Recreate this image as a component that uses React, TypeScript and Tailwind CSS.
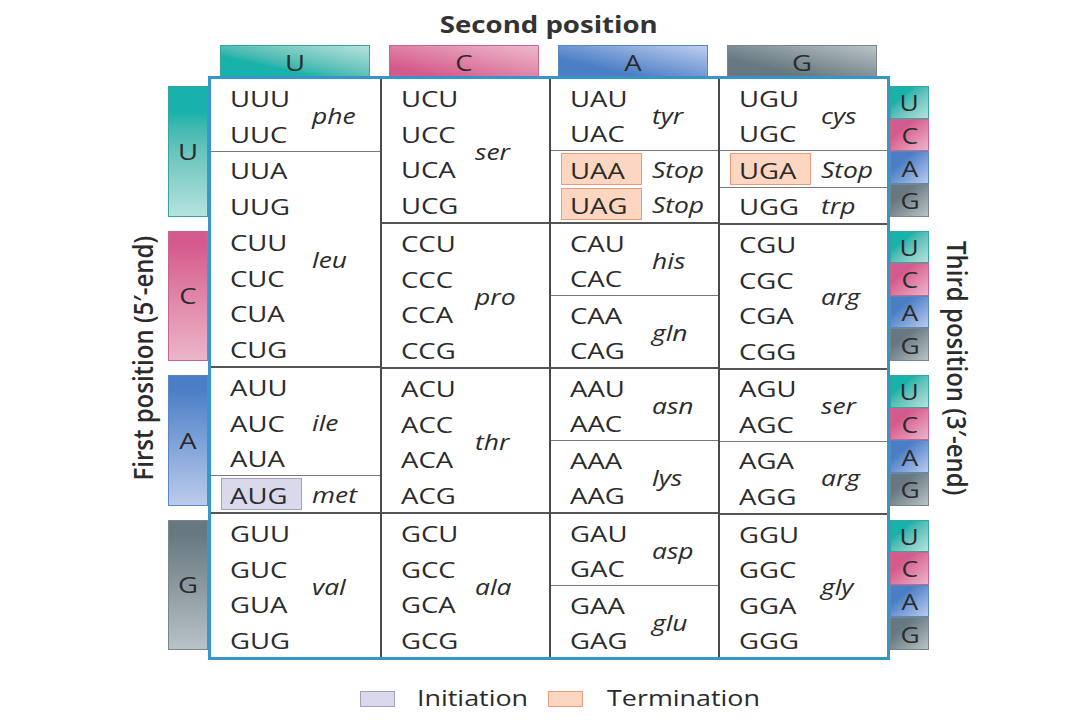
import React from 'react';

type Mark = 'init' | 'term';
type Group = { codons: string[]; aa: string; mark?: Mark; perLine?: boolean };

const columns: { labelMl: string; groups: Group[] }[] = [
  {
    labelMl: 'ml-[10px]',
    groups: [
      { codons: ['UUU', 'UUC'], aa: 'phe' },
      { codons: ['UUA', 'UUG', 'CUU', 'CUC', 'CUA', 'CUG'], aa: 'leu' },
      { codons: ['AUU', 'AUC', 'AUA'], aa: 'ile' },
      { codons: ['AUG'], aa: 'met', mark: 'init' },
      { codons: ['GUU', 'GUC', 'GUA', 'GUG'], aa: 'val' },
    ],
  },
  {
    labelMl: 'ml-[2px]',
    groups: [
      { codons: ['UCU', 'UCC', 'UCA', 'UCG'], aa: 'ser' },
      { codons: ['CCU', 'CCC', 'CCA', 'CCG'], aa: 'pro' },
      { codons: ['ACU', 'ACC', 'ACA', 'ACG'], aa: 'thr' },
      { codons: ['GCU', 'GCC', 'GCA', 'GCG'], aa: 'ala' },
    ],
  },
  {
    labelMl: 'ml-[10px]',
    groups: [
      { codons: ['UAU', 'UAC'], aa: 'tyr' },
      { codons: ['UAA', 'UAG'], aa: 'Stop', mark: 'term', perLine: true },
      { codons: ['CAU', 'CAC'], aa: 'his' },
      { codons: ['CAA', 'CAG'], aa: 'gln' },
      { codons: ['AAU', 'AAC'], aa: 'asn' },
      { codons: ['AAA', 'AAG'], aa: 'lys' },
      { codons: ['GAU', 'GAC'], aa: 'asp' },
      { codons: ['GAA', 'GAG'], aa: 'glu' },
    ],
  },
  {
    labelMl: 'ml-[10px]',
    groups: [
      { codons: ['UGU', 'UGC'], aa: 'cys' },
      { codons: ['UGA'], aa: 'Stop', mark: 'term', perLine: true },
      { codons: ['UGG'], aa: 'trp' },
      { codons: ['CGU', 'CGC', 'CGA', 'CGG'], aa: 'arg' },
      { codons: ['AGU', 'AGC'], aa: 'ser' },
      { codons: ['AGA', 'AGG'], aa: 'arg' },
      { codons: ['GGU', 'GGC', 'GGA', 'GGG'], aa: 'gly' },
    ],
  },
];

const grow: Record<number, string> = {
  1: 'flex-[1_1_0%]',
  2: 'flex-[2_2_0%]',
  3: 'flex-[3_3_0%]',
  4: 'flex-[4_4_0%]',
  6: 'flex-[6_6_0%]',
};

// one entry per base, same order everywhere: U C A G
const bases = [
  {
    b: 'U',
    top: 'bg-linear-to-tr from-[#17b2a9] from-35% to-[#b6e2de] border-[#31a7a0]',
    side: 'bg-linear-to-b from-[#17b2a9] from-20% to-[#b6e2de] border-[#31a7a0]',
    sq: 'bg-linear-to-br from-[#17b2a9] from-30% to-[#b6e2de] border-[#31a7a0]',
  },
  {
    b: 'C',
    top: 'bg-linear-to-tr from-[#d45a8c] from-20% to-[#ecb9cd] border-[#c9638f]',
    side: 'bg-linear-to-b from-[#d45a8c] from-10% to-[#ebb5ca] border-[#c9638f]',
    sq: 'bg-linear-to-br from-[#d45a8c] from-30% to-[#ebb5ca] border-[#c9638f]',
  },
  {
    b: 'A',
    top: 'bg-linear-to-tr from-[#4a7ec5] from-30% to-[#bfcdee] border-[#5887c6]',
    side: 'bg-linear-to-b from-[#4a7ec5] from-10% to-[#bccbec] border-[#5887c6]',
    sq: 'bg-linear-to-br from-[#4a7ec5] from-30% to-[#bccbec] border-[#5887c6]',
  },
  {
    b: 'G',
    top: 'bg-linear-to-tr from-[#677880] from-30% to-[#bac4c8] border-[#78858b]',
    side: 'bg-linear-to-b from-[#677880] from-10% to-[#b9c3c7] border-[#78858b]',
    sq: 'bg-linear-to-br from-[#677880] from-30% to-[#b9c3c7] border-[#78858b]',
  },
];

const boxCls: Record<string, string> = {
  init: 'bg-[#dad9eb] border-[#a2a1c1]',
  term: 'bg-[#fcd6c0] border-[#e99b7e]',
  none: 'border-transparent',
};

function Codon({ text, mark }: { text: string; mark?: Mark }) {
  return (
    <div className={`ml-[10px] w-[81px] h-[32px] pl-[8px] flex items-center border ${boxCls[mark ?? 'none']}`}>
      <span className="inline-block origin-left scale-x-[1.25] text-[22px] leading-none pt-[2px]">{text}</span>
    </div>
  );
}

function Label({ text, ml }: { text: string; ml: string }) {
  return (
    <div className={`flex items-center ${ml}`}>
      <span className="inline-block origin-left scale-x-[1.2] text-[22px] italic leading-none">{text}</span>
    </div>
  );
}

function CodeColumn({ groups, labelMl, first }: { groups: Group[]; labelMl: string; first: boolean }) {
  let start = 0;
  return (
    <div className={`flex flex-col ${first ? '' : 'border-l-2 border-[#4a4a4a]'}`}>
      {groups.map((g, i) => {
        const s = start;
        start += g.codons.length;
        const line = s === 0 ? '' : s % 4 === 0 ? 'border-t-2 border-[#555]' : 'border-t border-[#7a7a7a]';
        return (
          <div key={i} className={`flex ${grow[g.codons.length]} ${line}`}>
            {g.perLine ? (
              <div className="flex flex-col flex-1">
                {g.codons.map((c) => (
                  <div key={c} className="flex-1 flex items-center">
                    <Codon text={c} mark={g.mark} />
                    <Label text={g.aa} ml={labelMl} />
                  </div>
                ))}
              </div>
            ) : (
              <>
                <div className="flex flex-col">
                  {g.codons.map((c) => (
                    <div key={c} className="flex-1 flex items-center">
                      <Codon text={c} mark={g.mark} />
                    </div>
                  ))}
                </div>
                <Label text={g.aa} ml={labelMl} />
              </>
            )}
          </div>
        );
      })}
    </div>
  );
}

export default function App() {
  return (
    <div className="w-[1080px] h-[720px] bg-white text-[#2b2b2b] font-['Open_Sans',sans-serif] flex flex-col overflow-hidden">
      {/* title */}
      <div className="h-[45px] pt-[3px] ml-[208px] w-[682px] flex items-center justify-center">
        <span className="inline-block scale-x-[1.2] text-[23px] font-bold text-[#333]">Second position</span>
      </div>

      <div className="flex">
        {/* first position label */}
        <div className="w-[168px] pt-[31px]">
          <div className="h-[584px] flex items-center justify-end pr-[10px] pb-[20px]">
            <span className="[writing-mode:vertical-rl] rotate-180 scale-x-[1.1] text-[24px] font-semibold leading-[30px]">
              First position (5′-end)
            </span>
          </div>
        </div>

        {/* first position tabs */}
        <div className="w-[40px] pt-[31px]">
          <div className="h-[584px] py-[3px] grid grid-rows-4">
            {bases.map((x) => (
              <div key={x.b} className="py-[7px]">
                <div className={`h-full border flex items-center justify-center ${x.side}`}>
                  <span className="inline-block scale-x-[1.25] text-[22px]">{x.b}</span>
                </div>
              </div>
            ))}
          </div>
        </div>

        {/* second position tabs + table */}
        <div className="w-[682px] flex flex-col">
          <div className="h-[31px] px-[3px] grid grid-cols-4">
            {bases.map((x) => (
              <div key={x.b} className="pl-[9px]">
                <div className={`w-[150px] h-full border border-b-0 flex items-center justify-center ${x.top}`}>
                  <span className="inline-block scale-x-[1.25] text-[22px]">{x.b}</span>
                </div>
              </div>
            ))}
          </div>
          <div className="h-[584px] border-[3px] border-[#3796c9] grid grid-cols-4">
            {columns.map((c, i) => (
              <CodeColumn key={i} groups={c.groups} labelMl={c.labelMl} first={i === 0} />
            ))}
          </div>
        </div>

        {/* third position squares */}
        <div className="w-[39px] pt-[31px]">
          <div className="h-[584px] py-[3px] grid grid-rows-4">
            {bases.map((row) => (
              <div key={row.b} className="py-[7px] flex flex-col">
                {bases.map((x) => (
                  <div key={x.b} className={`flex-1 border flex items-center justify-center ${x.sq}`}>
                    <span className="inline-block scale-x-[1.2] text-[22px] leading-none">{x.b}</span>
                  </div>
                ))}
              </div>
            ))}
          </div>
        </div>

        {/* third position label */}
        <div className="pt-[31px] pl-[13px]">
          <div className="h-[584px] flex items-center">
            <span className="[writing-mode:vertical-rl] scale-x-[1.1] text-[24px] font-semibold leading-[30px]">
              Third position (3′-end)
            </span>
          </div>
        </div>
      </div>

      {/* legend */}
      <div className="h-[60px] pt-[18px] flex items-center">
        <div className="ml-[360px] w-[35px] h-[16px] border border-[#a2a1c1] bg-[#dad9eb]" />
        <span className="ml-[22px] w-[131px] inline-block origin-left scale-x-[1.28] text-[21px]">Initiation</span>
        <div className="w-[35px] h-[16px] border border-[#e99b7e] bg-[#fcd6c0]" />
        <span className="ml-[24px] inline-block origin-left scale-x-[1.28] text-[21px]">Termination</span>
      </div>
    </div>
  );
}
